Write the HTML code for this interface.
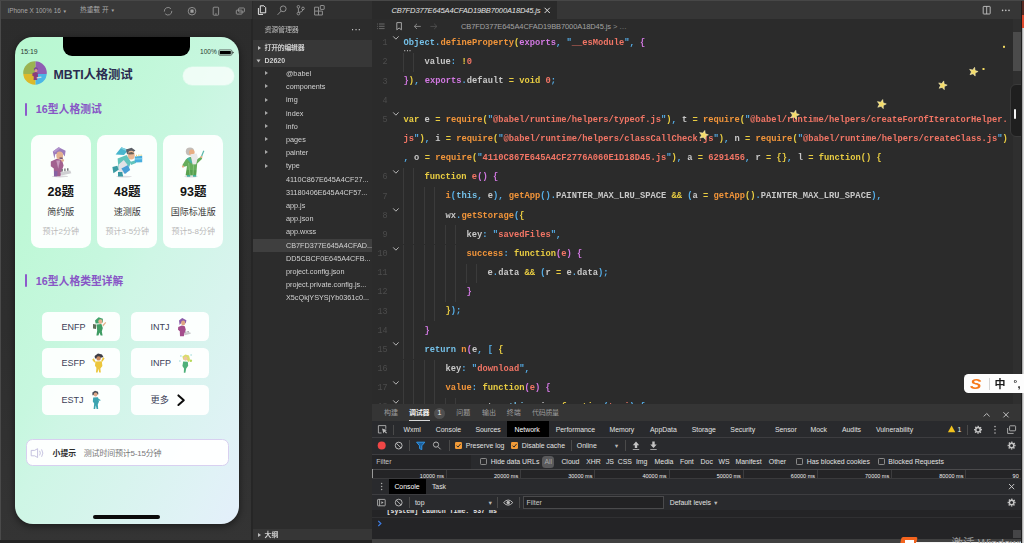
<!DOCTYPE html>
<html lang="zh-CN">
<head>
<meta charset="utf-8">
<title>MBTI devtools</title>
<style>
*{box-sizing:border-box;margin:0;padding:0}
html,body{width:1024px;height:543px;overflow:hidden;background:#2b2b2b}
body{position:relative;font-family:"Liberation Sans","Noto Sans CJK SC",sans-serif;color:#ccc;font-size:7px;line-height:1}
.abs{position:absolute}
.t{position:absolute;white-space:nowrap;line-height:10px;height:10px}
svg{position:absolute;overflow:visible}
/* simulator */
#sim{left:0;top:0;width:252px;height:543px;background:linear-gradient(180deg,#2c2c2c 0%,#2e2e2e 60%,#343434 100%)}
#simbar{left:0;top:0;width:252px;height:19px;background:#393939}
#phone{left:14.5px;top:37px;width:224px;height:486.8px;border-radius:18px;overflow:hidden;
 background:linear-gradient(118deg,#b8f8d1 0%,#bef8d6 22%,#c7f7df 43%,#cef6e5 52%,#d8f4ee 72%,#e0f2f6 89%,#e4effb 100%);
 box-shadow:0 2px 6px 1px rgba(0,0,0,.4)}
.card{position:absolute;top:98px;width:60px;height:113px;background:rgba(255,255,255,.93);border-radius:8.5px}
.card .n{position:absolute;left:0;width:60px;text-align:center;top:50px;font-size:12.5px;line-height:15px;font-weight:bold;color:#141414}
.card .m{position:absolute;left:0;width:60px;text-align:center;top:70.5px;font-size:9px;line-height:12px;color:#3a3a3a}
.card .s{position:absolute;left:-5px;width:70px;text-align:center;top:91.9px;font-size:8px;line-height:10px;color:#b9b9b9}
.btn{position:absolute;width:78px;height:29.5px;background:rgba(255,255,255,.93);border-radius:5.5px}
.btn span{position:absolute;left:19.5px;top:9px;font-size:9px;line-height:12px;color:#3c4058}
.sec{position:absolute;margin-top:.8px;left:21px;font-size:10.8px;line-height:13px;font-weight:bold;color:#8856c6;white-space:nowrap}
.bar{position:absolute;left:10px;width:2px;height:13px;background:#8d5acb;border-radius:1px}
/* explorer */
#exp{left:252.5px;top:0;width:119.5px;height:543px;background:#2c2c2c}
.row{position:absolute;left:286px;font-size:7.25px;line-height:10px;height:10px;white-space:nowrap;color:#d2d2d2}
.arr{position:absolute;width:0;height:0;border-left:3px solid #bdbdbd;border-top:2px solid transparent;border-bottom:2px solid transparent}
/* editor */
#ed{left:372px;top:0;width:652px;height:404px;background:#2b2b2b;overflow:hidden}
.ln{position:absolute;left:0;width:387.5px;text-align:right;font-family:"Liberation Mono",monospace;font-size:8.4px;line-height:12px;height:12px;color:#4c4c4c}
.cl{position:absolute;left:403.6px;font-family:"Liberation Mono",monospace;font-size:8.755px;line-height:12px;height:12px;white-space:pre;font-weight:bold;color:#d2d2d2;letter-spacing:0}
.b{color:#74c0e8}.o{color:#f2953a}.y{color:#e9cd42}.v{color:#d278e2}.p{color:#55aee8}.s{color:#f27565}.w{color:#c8c8c8}
.g{position:absolute;width:1px;background:#3b3b3b}
/* debugger */
#dbg{left:372px;top:404px;width:652px;height:139px;background:#292a2d}
.dt{position:absolute;white-space:nowrap;font-size:7.1px;line-height:10px;height:10px;color:#d6d6d6}
.sep{position:absolute;width:1px;background:#4a4a4a}
.hl{position:absolute;left:372px;width:649px;height:1px;background:#3d3d40}
.cb{position:absolute;width:7px;height:7px;border-radius:1.2px}
#wrap{position:absolute;left:0;top:0;width:1024px;height:543px;overflow:hidden;filter:blur(.55px)}
</style>
</head>
<body>
<div id="wrap">
<!-- ============ SIMULATOR ============ -->
<div id="sim" class="abs"></div>
<div id="simbar" class="abs"></div>
<div class="abs" style="left:0;top:0;width:1024px;height:1px;background:#474747;z-index:5"></div>
<div class="abs" style="left:0;top:0;width:1.3px;height:543px;background:#4a4a4a"></div>
<div class="abs" style="left:250.5px;top:19px;width:2px;height:524px;background:#262626"></div>
<div class="t" style="left:7.8px;top:5.6px;font-size:6.4px;color:#a8a8a8">iPhone X 100% 16 <span style="font-size:4.6px">▼</span></div>
<div class="t" style="left:80px;top:5.4px;font-size:6.7px;color:#a8a8a8">热重载 开 <span style="font-size:4.6px">▼</span></div>
<svg style="left:163px;top:6px" width="90" height="11" viewBox="163 6 90 11" fill="none" stroke="#959595" stroke-width="0.9">
 <path d="M164.3 11.6a3.8 3.8 0 0 1 6.6-2.9M171.8 10.9a3.8 3.8 0 0 1-6.6 2.9"/>
 <circle cx="192" cy="11.2" r="3.8"/><rect x="190.400" y="9.600" width="3.200" height="3.200" rx=".4" fill="#a0a0a0" stroke="none"/>
 <rect x="213.2" y="7.2" width="5.4" height="8" rx="0.8"/><path d="M215 14h1.8"/>
 <rect x="238.6" y="8" width="5.8" height="4" rx="0.7"/><rect x="236.3" y="10.1" width="5.8" height="4" rx="0.7"/>
</svg>

<div id="phone" class="abs"></div>
<!-- notch -->
<div class="abs" style="left:63px;top:37px;width:126.5px;height:19.3px;background:#000;border-radius:0 0 9px 9px"></div>
<div class="t" style="left:20.4px;top:46.9px;font-size:6.9px;color:#2b3a33">15:19</div>
<div class="t" style="left:200px;top:47.4px;font-size:6.6px;color:#2b3a33">100%</div>
<svg style="left:218px;top:48.600px" width="17" height="8" viewBox="218 48 17 8">
 <rect x="218.8" y="48.9" width="13" height="5.4" rx="1" fill="none" stroke="#444" stroke-width="0.7"/>
 <rect x="219.8" y="49.9" width="11" height="3.4" rx="0.5" fill="#000"/>
 <path d="M232.4 50.3l1.5 1.3-1.5 1.3z" fill="#222"/>
</svg>
<!-- avatar -->
<svg style="left:23.300px;top:61.300px" width="24" height="24" viewBox="23 61 24 24">
 <defs><clipPath id="avc"><circle cx="35" cy="73" r="11.8"/></clipPath>
 <filter id="soft" x="-20%" y="-20%" width="140%" height="140%"><feGaussianBlur stdDeviation="0.35"/></filter></defs>
 <g clip-path="url(#avc)">
  <rect x="23" y="61" width="12.6" height="13" fill="#9bb351"/>
  <rect x="35.6" y="61" width="12" height="13" fill="#8f5db3"/>
  <rect x="23" y="74" width="12.6" height="12" fill="#dcb92b"/>
  <rect x="35.6" y="74" width="12" height="12" fill="#4cb6e6"/>
 </g>
 <g filter="url(#soft)">
  <path d="M33.8 68.6l2-1.6 2.2 1.4-.4 2.4-3.4.2z" fill="#7b4c97"/>
  <ellipse cx="36" cy="70.6" rx="1.5" ry="1.7" fill="#d99a86"/>
  <path d="M32.6 73l3-1 2.2 1 .2 3.4-1 3.6h-3.4l.2-3.6-1.6-1z" fill="#8a3e7c"/>
  <path d="M36.6 77.2l4.6-.6.4 1.2-4.8.8z" fill="#d8d8d8"/>
 </g>
</svg>
<div class="t" style="left:53.6px;top:67px;font-size:12.4px;line-height:16px;height:16px;font-weight:bold;color:#2a2b50;letter-spacing:-.1px">MBTI人格测试</div>
<div class="abs" style="left:183px;top:67px;width:51px;height:18px;border-radius:9px;background:rgba(255,255,255,.72);box-shadow:0 0 0 .5px rgba(255,255,255,.5)"></div>

<div class="bar" style="left:25px;top:102.5px"></div>
<div class="sec" style="left:35.8px;top:102.6px">16型人格测试</div>

<div class="card" style="left:30.8px;top:135px"><div class="n">28题</div><div class="m">简约版</div><div class="s">预计2分钟</div></div>
<div class="card" style="left:97.3px;top:135px"><div class="n">48题</div><div class="m">速测版</div><div class="s">预计3-5分钟</div></div>
<div class="card" style="left:163.2px;top:135px"><div class="n">93题</div><div class="m">国际标准版</div><div class="s">预计5-8分钟</div></div>

<!-- card characters -->
<svg style="left:30px;top:140px" width="200" height="40" viewBox="30 140 200 40"><defs><filter id="soft2" x="-20%" y="-20%" width="140%" height="140%"><feGaussianBlur stdDeviation="0.5"/></filter></defs><g filter="url(#soft2)">
 <!-- architect (purple) -->
 <ellipse cx="60" cy="176.400" rx="8" ry="1" fill="#d9d9dc"/>
 <path d="M52.800 151.400l5.800-4.200 7 3.600-.8 5.600-2.400-3.200-7.200 1-.8 4.600z" fill="#9b7bbb"/>
 <path d="M52.800 151.400l5.800-4.200 2 1-5.600 4.400z" fill="#b294cc"/>
 <ellipse cx="59.700" cy="155.400" rx="3.400" ry="3.900" fill="#e3b08f"/>
 <path d="M59.400 157.400l3.200.2.200 1.300-3.200-.2z" fill="#6a4a6a"/>
 <path d="M50.800 161.600l6-2.800 5.200 1.200 1.600 5.600-1.600 4.600-1.600 6h-6.400l-.2-7.800-3-2.200z" fill="#a2608f"/>
 <path d="M54 170.800l3.600.4-.4 5h-3.200z" fill="#8762a3"/>
 <path d="M56.300 160.500l1.900 8.200 1.900-8.200z" fill="#c79abd"/>
 <circle cx="62.600" cy="160.400" r="1.400" fill="#e3b08f"/>
 <path d="M60.200 172.200l10-1.800 1.200 2.800-10 2.200z" fill="#cfcfd2"/>
 <path d="M61.400 169h1.500v2.600h-1.500zM64.200 168.400h1.400v2.800h-1.400zM67 168.200h1.500v2.600H67z" fill="#77777c"/>
 <!-- teal runner -->
 <ellipse cx="124" cy="176.600" rx="8" ry=".9" fill="#dcdce0"/>
 <path d="M115.600 154.600l5.800-7.400 7 2.800-4.400 5z" fill="#49b5cd"/>
 <path d="M121.400 147.200l7 2.800-2.400 1-5-2.600z" fill="#7fd0e0"/>
 <path d="M126 149.400l5.600-1.600 3.800 2.800-3.400 2.600-5 1z" fill="#5a5f66"/>
 <ellipse cx="131.200" cy="155.200" rx="3.500" ry="4.400" fill="#e9b794"/>
 <path d="M128 152.800l3.600-.8 2.400 1-.4 1.200-5 .4z" fill="#6a6058"/>
 <path d="M117.600 158.400l9-3.400 4.400 7-3 8.200h-9.400z" fill="#62c4bc"/>
 <path d="M118.600 164.400l5.200-4.400 5.400 7-3 7-7.600-2z" fill="#e2e2e6"/>
 <path d="M121.400 168.400l6.600-3.400 2.200 5-5.400 4z" fill="#4a9fd6"/>
 <path d="M112.400 167l5-1.200 1.200 4-5.200 3.400z" fill="#3a9aa2"/>
 <path d="M118 172h4.200l1 4.600H118z" fill="#3a9aa2"/>
 <path d="M130 162l6-2v3l-5 2z" fill="#62c4bc"/>
 <path d="M134.800 156.400l7.400-.6v6.400l-7.400.4z" fill="#46aede"/>
 <path d="M134.800 158.600l7.400-.4v1l-7.400.4z" fill="#8fd4f0"/>
 <path d="M136 154.800h1v1.700h-1zM138.400 154.600h1v1.700h-1zM140.600 154.400h1v1.700h-1z" fill="#ead27a"/>
 <!-- green sage -->
 <ellipse cx="191" cy="176.600" rx="7" ry=".9" fill="#dcdce0"/>
 <ellipse cx="190" cy="151.400" rx="4.200" ry="4" fill="#c2bdb8"/>
 <ellipse cx="191.800" cy="152.600" rx="2.800" ry="3" fill="#e8ad82"/>
 <path d="M186 159.200l5-2.400 6 2.400 4-2.400 1.200 2-5 4.600-1 11.800H185.600l1.400-9.200-4 1-.6-2z" fill="#66ad5c"/>
 <path d="M186.600 158.400l3-1.400 3.200 5.600-1.600.8z" fill="#4ab5a0"/>
 <path d="M190.400 154.200l6.400-.6 1 4-1.600 6.600-3.600.4z" fill="#e8e8e8"/>
 <path d="M187 170l9.200.2-.2 5H185.800z" fill="#58a050"/>
 <path d="M188.600 163l1.400 12M193.600 165l-.6 10" stroke="#8cc680" stroke-width=".8" fill="none"/>
 <path d="M201.200 157.200l2.600-6.400" stroke="#5ab8aa" stroke-width="1.200" fill="none"/>
 <circle cx="201.400" cy="157" r="1.100" fill="#e8ad82"/>
 <circle cx="183" cy="166.600" r="1.100" fill="#e8ad82"/>
 <path d="M187 175h3.200v1.800H187zM193 175h3.200v1.800H193z" fill="#3fb09a"/>
</g></svg>

<div class="bar" style="left:25px;top:274px"></div>
<div class="sec" style="left:35.8px;top:274px">16型人格类型详解</div>

<div class="btn" style="left:42px;top:311.6px"><span>ENFP</span></div>
<div class="btn" style="left:131px;top:311.6px"><span>INTJ</span></div>
<div class="btn" style="left:42px;top:348.4px"><span>ESFP</span></div>
<div class="btn" style="left:131px;top:348.4px"><span>INFP</span></div>
<div class="btn" style="left:42px;top:385px"><span>ESTJ</span></div>
<div class="btn" style="left:131px;top:385px"><span style="font-size:9.2px">更多</span></div>
<svg style="left:85px;top:312px" width="115" height="102" viewBox="85 312 115 102"><g filter="url(#soft)">
 <!-- ENFP green -->
 <path d="M95 320.4l3.6-3.2 4.2 1.6.2 3.4-3 1-4.4.4z" fill="#43a26c"/>
 <ellipse cx="100.4" cy="321.6" rx="2.1" ry="2.3" fill="#e6b08d"/>
 <path d="M96.4 324.6l5-.6 1.4 4-1 3.6.8 4h-2l-1-3.2-1.2 3.2h-2l.8-5z" fill="#3f9c63"/>
 <path d="M93 324l3 .6v4.4l-3-.6z" fill="#5f6e58"/>
 <path d="M102.4 325l3-3 .8.8-3 3.6z" fill="#e6b08d"/>
 <!-- ESFP yellow -->
 <path d="M94.6 356l3.4-2.4 4 .8 1.4 2.6-4.4 1.2-4 .4z" fill="#3d3d45"/>
 <ellipse cx="98.6" cy="358.4" rx="2.2" ry="2.2" fill="#c98a5e"/>
 <path d="M95.4 361.4l6.4-.2.6 4.8-2 2.4.4 4h-1.600l-.8-3.600-.8 3.600H96l.4-4.600-1.400-2z" fill="#ecc63c"/>
 <path d="M92.200 359.800l1.600-1.600 1.800 3.600-1.200.8zM104.600 358.400l-1.600-1.400-1.800 4 1.200.8z" fill="#ecc63c"/>
 <!-- ESTJ teal -->
 <path d="M92.400 392.400l2.600-1.600 3 1 .4 2.400-3 .8-3 .2z" fill="#4b4f58"/>
 <ellipse cx="95.600" cy="394.600" rx="1.900" ry="2" fill="#dca687"/>
 <path d="M93.200 397.400l4.800-.2 1 4.400-1.200 3 .4 4.400h-1.600l-.8-3.800-.6 3.800h-1.600l.6-5.600-1.400-2z" fill="#3aa3b0"/>
 <path d="M98.200 398.400l2.400 1.600-.6 1-2.400-1.400z" fill="#3aa3b0"/>
 <!-- INTJ purple -->
 <path d="M179 320.600l3.200-2.600 4.200 2.200-.6 3-4.200-.6-2 2.400z" fill="#8a5caa"/>
 <ellipse cx="183.200" cy="323" rx="2.100" ry="2.400" fill="#dfa684"/>
 <path d="M178.200 327l3.600-1.600 3 .8 1 3.600-1 2.800-1 3.600h-3.800l-.2-5-1.800-1.400z" fill="#a44e8c"/>
 <path d="M184.200 333.200l6-1 .6 1.600-6 1.400z" fill="#c9c9cb"/>
 <path d="M185.400 331.400h.9v1.400h-.9zM187.600 331h.9v1.600h-.9z" fill="#6d6d72"/>
 <!-- INFP yellow-green -->
 <path d="M182.400 356.600l3-2.200 3.600 1.200 1 3.600-1.200 3-2.400-3-3.200.6z" fill="#d9dc6a"/>
 <ellipse cx="185.600" cy="358.600" rx="1.900" ry="2.100" fill="#eec4a0"/>
 <path d="M183.200 361.600l4.600.2.400 4-2 2.800-.8 4.200h-1.600l.2-4.400-1.600-2.400z" fill="#4fb07a"/>
 <circle cx="190.800" cy="360.800" r="1.300" fill="#b7d95a"/>
 <path d="M180.400 355.600h1v1h-1zM190.600 354.600h1v1h-1zM179.400 360.600h1v1h-1z" fill="#5ac1c0"/>
 </g>
 <path d="M178.400 395.400l5.400 4.800-5.400 4.800" fill="none" stroke="#0c0c0c" stroke-width="2" stroke-linecap="round" stroke-linejoin="round"/>
</svg>

<!-- tip bar -->
<div class="abs" style="left:25.6px;top:439.300px;width:203px;height:27.200px;border-radius:6.5px;background:rgba(255,255,255,.95);border:.8px solid #d8d0f0"></div>
<svg style="left:30px;top:447px" width="16" height="12" viewBox="30 447 16 12" fill="none" stroke="#b7b4d8" stroke-width="0.8">
 <path d="M31.200 450.400h3.400l3-1.700v8.800l-3-1.700h-3.400z"/><path d="M39.600 450.800q1.500 2.300 0 4.600M41.600 449.400q2.500 3.700 0 7.400"/>
</svg>
<div class="t" style="left:52.6px;top:448.700px;font-size:7.8px;font-weight:bold;color:#2c2c2c">小提示</div>
<div class="t" style="left:83.800px;top:448.700px;font-size:8px;color:#777;letter-spacing:-.2px">测试时间预计5-15分钟</div>
<!-- home bar -->
<div class="abs" style="left:93px;top:515px;width:66.500px;height:3.600px;border-radius:2px;background:#0a0a0a"></div>
<!-- ============ EXPLORER ============ -->
<div id="exp" class="abs"></div>
<div class="abs" style="left:252.5px;top:0;width:119.500px;height:19px;background:#303030"></div>
<svg style="left:255px;top:3px" width="75" height="15" viewBox="255 3 75 15" fill="none" stroke="#949494" stroke-width="0.95">
 <path d="M260.300 5.800h3.600l1.800 1.800v5.200h-5.400z" stroke="#ededed"/><path d="M258.400 8v6.400h4.600" stroke="#ededed"/>
 <circle cx="283.200" cy="8.800" r="2.900"/><path d="M281.200 11l-3.600 3.800"/>
 <circle cx="298.400" cy="6.800" r="1.300"/><circle cx="298.400" cy="13.600" r="1.300"/><circle cx="303" cy="8.400" r="1.300"/><path d="M298.400 8.100v4.200M303 9.700q-.2 2.400-4.400 2.800"/>
 <path d="M314.600 7.200h3.900v3.900h3.900v3.900h-7.800zM314.600 11.100h3.900v3.900"/><rect x="320.300" y="5.500" width="3.900" height="3.900" rx=".4" fill="#303030"/>
</svg>
<div class="t" style="left:264.500px;top:24.800px;font-size:7px;color:#bdbdbd;letter-spacing:-.2px">资源管理器</div>
<div class="t" style="left:351.500px;top:25.400px;font-size:7.5px;color:#c4c4c4;letter-spacing:.9px;font-weight:bold">···</div>
<div class="abs" style="left:252.500px;top:40.200px;width:119.500px;height:27px;background:#373737"></div>
<div class="arr" style="left:257.600px;top:45.600px"></div>
<div class="t" style="left:264.500px;top:42.700px;font-size:6.9px;font-weight:bold;color:#cfcfcf;letter-spacing:-.25px">打开的编辑器</div>
<div class="arr" style="left:256.800px;top:58.800px;transform:rotate(90deg)"></div>
<div class="t" style="left:264.500px;top:56.200px;font-size:7px;font-weight:bold;color:#cfcfcf">D2620</div>
<div class="arr" style="left:265.200px;top:71.2px;border-left-color:#a8a8a8"></div><div class="row" style="top:69.0px">@babel</div>
<div class="arr" style="left:265.200px;top:84.4px;border-left-color:#a8a8a8"></div><div class="row" style="top:82.2px">components</div>
<div class="arr" style="left:265.200px;top:97.6px;border-left-color:#a8a8a8"></div><div class="row" style="top:95.4px">img</div>
<div class="arr" style="left:265.200px;top:110.8px;border-left-color:#a8a8a8"></div><div class="row" style="top:108.6px">index</div>
<div class="arr" style="left:265.200px;top:124.0px;border-left-color:#a8a8a8"></div><div class="row" style="top:121.8px">info</div>
<div class="arr" style="left:265.200px;top:137.2px;border-left-color:#a8a8a8"></div><div class="row" style="top:135.0px">pages</div>
<div class="arr" style="left:265.200px;top:150.3px;border-left-color:#a8a8a8"></div><div class="row" style="top:148.1px">painter</div>
<div class="arr" style="left:265.200px;top:163.5px;border-left-color:#a8a8a8"></div><div class="row" style="top:161.3px">type</div>
<div class="row" style="top:174.5px">4110C867E645A4CF27...</div>
<div class="row" style="top:187.7px">31180406E645A4CF57...</div>
<div class="row" style="top:200.9px">app.js</div>
<div class="row" style="top:214.1px">app.json</div>
<div class="row" style="top:227.3px">app.wxss</div>
<div class="abs" style="left:252.500px;top:238.8px;width:119.500px;height:12.800px;background:#3f3f3f"></div>
<div class="row" style="top:240.5px">CB7FD377E645A4CFAD...</div>
<div class="row" style="top:253.7px">DD5CBCF0E645A4CFB...</div>
<div class="row" style="top:266.9px">project.config.json</div>
<div class="row" style="top:280.0px">project.private.config.js...</div>
<div class="row" style="top:293.2px">X5cQkjYSYSjYb0361c0...</div>
<div class="abs" style="left:252.500px;top:529px;width:119.500px;height:10.500px;background:#363636"></div>
<div class="arr" style="left:257.600px;top:533.400px"></div>
<div class="t" style="left:264.500px;top:530.400px;font-size:6.9px;font-weight:bold;color:#cfcfcf">大纲</div>
<!-- ============ EDITOR ============ -->
<div id="ed" class="abs"></div>
<div class="abs" style="left:372px;top:0;width:652px;height:19px;background:#363636"></div>
<div class="abs" style="left:372px;top:0;width:185px;height:19px;background:#2a2a2a"></div>
<div class="t" style="left:391.400px;top:6.300px;font-size:7.5px;font-style:italic;color:#e4e4e4;letter-spacing:-.12px">CB7FD377E645A4CFAD19BB7000A18D45.js</div>
<svg style="left:543px;top:6px" width="9" height="9" viewBox="0 0 9 9"><path d="M1.600 1.800l5.200 5.200M6.800 1.800L1.600 7" stroke="#e0e0e0" stroke-width="1" fill="none"/></svg>
<svg style="left:980px;top:4px" width="36" height="13" viewBox="980 4 36 13" fill="none" stroke="#c4c4c4" stroke-width="0.9"><rect x="983.200" y="6.400" width="7" height="7.600" rx=".6"/><path d="M986.700 6.400v7.600"/><g fill="#c4c4c4" stroke="none"><circle cx="1002.600" cy="10.400" r=".8"/><circle cx="1005.800" cy="10.400" r=".8"/><circle cx="1009" cy="10.400" r=".8"/></g></svg>
<svg style="left:376px;top:20px" width="66" height="13" viewBox="376 20 66 13" fill="none" stroke="#8a8a8a" stroke-width="0.9">
 <path d="M379 24h5.600M379 26.300h5.600M379 28.600h5.600M377.200 24h.8M377.200 26.300h.8M377.200 28.600h.8" stroke="#6f6f6f"/>
 <path d="M396.800 22.600h4.600v7.200l-2.300-1.800-2.300 1.800z" stroke="#b0b0b0"/>
 <path d="M420.800 26.400h-6.400M417 23.800l-2.700 2.600 2.700 2.600" stroke="#909090"/>
 <path d="M430.400 26.400h6.400M434.200 23.800l2.700 2.600-2.700 2.600" stroke="#505050"/>
</svg>
<div class="t" style="left:461px;top:22.100px;font-size:7.5px;color:#a2a2a2;letter-spacing:-.1px">CB7FD377E645A4CFAD19BB7000A18D45.js <span style="color:#8c8c8c">&gt; …</span></div>
<div class="g" style="left:402.8px;top:52.8px;height:19.2px"></div>
<div class="g" style="left:413.3px;top:52.8px;height:19.2px"></div>
<div class="g" style="left:402.8px;top:167.8px;height:19.2px"></div>
<div class="g" style="left:413.3px;top:167.8px;height:19.2px"></div>
<div class="g" style="left:402.8px;top:187.0px;height:19.2px"></div>
<div class="g" style="left:413.3px;top:187.0px;height:19.2px"></div>
<div class="g" style="left:423.8px;top:187.0px;height:19.2px"></div>
<div class="g" style="left:434.3px;top:187.0px;height:19.2px"></div>
<div class="g" style="left:402.8px;top:206.1px;height:19.2px"></div>
<div class="g" style="left:413.3px;top:206.1px;height:19.2px"></div>
<div class="g" style="left:423.8px;top:206.1px;height:19.2px"></div>
<div class="g" style="left:434.3px;top:206.1px;height:19.2px"></div>
<div class="g" style="left:402.8px;top:225.3px;height:19.2px"></div>
<div class="g" style="left:413.3px;top:225.3px;height:19.2px"></div>
<div class="g" style="left:423.8px;top:225.3px;height:19.2px"></div>
<div class="g" style="left:434.3px;top:225.3px;height:19.2px"></div>
<div class="g" style="left:444.8px;top:225.3px;height:19.2px"></div>
<div class="g" style="left:455.3px;top:225.3px;height:19.2px"></div>
<div class="g" style="left:402.8px;top:244.5px;height:19.2px"></div>
<div class="g" style="left:413.3px;top:244.5px;height:19.2px"></div>
<div class="g" style="left:423.8px;top:244.5px;height:19.2px"></div>
<div class="g" style="left:434.3px;top:244.5px;height:19.2px"></div>
<div class="g" style="left:444.8px;top:244.5px;height:19.2px"></div>
<div class="g" style="left:455.3px;top:244.5px;height:19.2px"></div>
<div class="g" style="left:402.8px;top:263.7px;height:19.2px"></div>
<div class="g" style="left:413.3px;top:263.7px;height:19.2px"></div>
<div class="g" style="left:423.8px;top:263.7px;height:19.2px"></div>
<div class="g" style="left:434.3px;top:263.7px;height:19.2px"></div>
<div class="g" style="left:444.8px;top:263.7px;height:19.2px"></div>
<div class="g" style="left:455.3px;top:263.7px;height:19.2px"></div>
<div class="g" style="left:465.8px;top:263.7px;height:19.2px"></div>
<div class="g" style="left:476.4px;top:263.7px;height:19.2px"></div>
<div class="g" style="left:402.8px;top:282.8px;height:19.2px"></div>
<div class="g" style="left:413.3px;top:282.8px;height:19.2px"></div>
<div class="g" style="left:423.8px;top:282.8px;height:19.2px"></div>
<div class="g" style="left:434.3px;top:282.8px;height:19.2px"></div>
<div class="g" style="left:444.8px;top:282.8px;height:19.2px"></div>
<div class="g" style="left:455.3px;top:282.8px;height:19.2px"></div>
<div class="g" style="left:402.8px;top:302.0px;height:19.2px"></div>
<div class="g" style="left:413.3px;top:302.0px;height:19.2px"></div>
<div class="g" style="left:423.8px;top:302.0px;height:19.2px"></div>
<div class="g" style="left:434.3px;top:302.0px;height:19.2px"></div>
<div class="g" style="left:402.8px;top:321.2px;height:19.2px"></div>
<div class="g" style="left:413.3px;top:321.2px;height:19.2px"></div>
<div class="g" style="left:402.8px;top:340.3px;height:19.2px"></div>
<div class="g" style="left:413.3px;top:340.3px;height:19.2px"></div>
<div class="g" style="left:402.8px;top:359.5px;height:19.2px"></div>
<div class="g" style="left:413.3px;top:359.5px;height:19.2px"></div>
<div class="g" style="left:423.8px;top:359.5px;height:19.2px"></div>
<div class="g" style="left:434.3px;top:359.5px;height:19.2px"></div>
<div class="g" style="left:402.8px;top:378.7px;height:19.2px"></div>
<div class="g" style="left:413.3px;top:378.7px;height:19.2px"></div>
<div class="g" style="left:423.8px;top:378.7px;height:19.2px"></div>
<div class="g" style="left:434.3px;top:378.7px;height:19.2px"></div>
<div class="g" style="left:402.8px;top:397.8px;height:19.2px"></div>
<div class="g" style="left:413.3px;top:397.8px;height:19.2px"></div>
<div class="g" style="left:423.8px;top:397.8px;height:19.2px"></div>
<div class="g" style="left:434.3px;top:397.8px;height:19.2px"></div>
<div class="g" style="left:444.8px;top:397.8px;height:19.2px"></div>
<div class="g" style="left:455.3px;top:397.8px;height:19.2px"></div>
<div class="ln" style="top:37.2px">1</div>
<svg style="left:391.500px;top:34.7px" width="8" height="6" viewBox="0 0 8 6"><path d="M1.200 1.400l2.700 2.800 2.700-2.800" fill="none" stroke="#bdbdbd" stroke-width="0.95"/></svg>
<div class="cl" style="top:37.0px"><span class="b">Object</span><span class="p">.</span><span class="o">defineProperty</span><span class="y">(</span><span class="v">exports</span><span class="p">, "</span><span class="s">__esModule</span><span class="p">", </span><span class="v">{</span></div>
<div class="ln" style="top:56.4px">2</div>
<div class="cl" style="top:56.2px"><span class="w">    value</span><span class="p">: </span><span class="y">!</span><span class="s">0</span></div>
<div class="ln" style="top:75.5px">3</div>
<div class="cl" style="top:75.3px"><span class="v">}</span><span class="y">)</span><span class="p">, </span><span class="v">exports</span><span class="p">.</span><span class="w">default </span><span class="y">= void </span><span class="s">0</span><span class="p">;</span></div>
<div class="ln" style="top:94.7px">4</div>
<div class="ln" style="top:113.9px">5</div>
<svg style="left:391.500px;top:111.4px" width="8" height="6" viewBox="0 0 8 6"><path d="M1.200 1.400l2.700 2.800 2.700-2.800" fill="none" stroke="#bdbdbd" stroke-width="0.95"/></svg>
<div class="cl" style="top:113.7px"><span class="y">var </span><span class="w">e </span><span class="y">= </span><span class="o">require</span><span class="y">(</span><span class="p">"</span><span class="s">@babel/runtime/helpers/typeof.js</span><span class="p">"</span><span class="y">)</span><span class="p">, </span><span class="w">t </span><span class="y">= </span><span class="o">require</span><span class="y">(</span><span class="p">"</span><span class="s">@babel/runtime/helpers/createForOfIteratorHelper.</span></div>
<div class="cl" style="top:132.9px"><span class="s">js</span><span class="p">"</span><span class="y">)</span><span class="p">, </span><span class="w">i </span><span class="y">= </span><span class="o">require</span><span class="y">(</span><span class="p">"</span><span class="s">@babel/runtime/helpers/classCallCheck.js</span><span class="p">"</span><span class="y">)</span><span class="p">, </span><span class="w">n </span><span class="y">= </span><span class="o">require</span><span class="y">(</span><span class="p">"</span><span class="s">@babel/runtime/helpers/createClass.js</span><span class="p">"</span><span class="y">)</span></div>
<div class="cl" style="top:152.0px"><span class="p">, </span><span class="w">o </span><span class="y">= </span><span class="o">require</span><span class="y">(</span><span class="p">"</span><span class="s">4110C867E645A4CF2776A060E1D18D45.js</span><span class="p">"</span><span class="y">)</span><span class="p">, </span><span class="w">a </span><span class="y">= </span><span class="s">6291456</span><span class="p">, </span><span class="w">r </span><span class="y">= {}</span><span class="p">, </span><span class="w">l </span><span class="y">= function() {</span></div>
<div class="ln" style="top:171.4px">6</div>
<svg style="left:391.500px;top:168.9px" width="8" height="6" viewBox="0 0 8 6"><path d="M1.200 1.400l2.700 2.800 2.700-2.800" fill="none" stroke="#bdbdbd" stroke-width="0.95"/></svg>
<div class="cl" style="top:171.2px"><span class="y">    function </span><span class="s">e</span><span class="v">() {</span></div>
<div class="ln" style="top:190.6px">7</div>
<div class="cl" style="top:190.4px"><span class="o">        i</span><span class="p">(</span><span class="b">this</span><span class="p">, </span><span class="w">e</span><span class="p">), </span><span class="o">getApp</span><span class="p">().</span><span class="w">PAINTER_MAX_LRU_SPACE </span><span class="y">&amp;&amp; </span><span class="p">(</span><span class="w">a </span><span class="y">= </span><span class="o">getApp</span><span class="y">()</span><span class="p">.</span><span class="w">PAINTER_MAX_LRU_SPACE</span><span class="p">),</span></div>
<div class="ln" style="top:209.7px">8</div>
<svg style="left:391.500px;top:207.2px" width="8" height="6" viewBox="0 0 8 6"><path d="M1.200 1.400l2.700 2.800 2.700-2.800" fill="none" stroke="#bdbdbd" stroke-width="0.95"/></svg>
<div class="cl" style="top:209.5px"><span class="w">        wx</span><span class="p">.</span><span class="o">getStorage</span><span class="p">(</span><span class="y">{</span></div>
<div class="ln" style="top:228.9px">9</div>
<div class="cl" style="top:228.7px"><span class="w">            key</span><span class="p">: "</span><span class="s">savedFiles</span><span class="p">",</span></div>
<div class="ln" style="top:248.1px">10</div>
<svg style="left:391.500px;top:245.6px" width="8" height="6" viewBox="0 0 8 6"><path d="M1.200 1.400l2.700 2.800 2.700-2.800" fill="none" stroke="#bdbdbd" stroke-width="0.95"/></svg>
<div class="cl" style="top:247.9px"><span class="o">            success</span><span class="p">: </span><span class="y">function</span><span class="v">(</span><span class="s">e</span><span class="v">) {</span></div>
<div class="ln" style="top:267.2px">11</div>
<div class="cl" style="top:267.0px"><span class="w">                e</span><span class="p">.</span><span class="w">data </span><span class="y">&amp;&amp; </span><span class="p">(</span><span class="w">r </span><span class="y">= </span><span class="w">e</span><span class="p">.</span><span class="w">data</span><span class="p">);</span></div>
<div class="ln" style="top:286.4px">12</div>
<div class="cl" style="top:286.2px"><span class="v">            }</span></div>
<div class="ln" style="top:305.6px">13</div>
<div class="cl" style="top:305.4px"><span class="y">        }</span><span class="p">);</span></div>
<div class="ln" style="top:324.8px">14</div>
<div class="cl" style="top:324.6px"><span class="v">    }</span></div>
<div class="ln" style="top:343.9px">15</div>
<svg style="left:391.500px;top:341.4px" width="8" height="6" viewBox="0 0 8 6"><path d="M1.200 1.400l2.700 2.800 2.700-2.800" fill="none" stroke="#bdbdbd" stroke-width="0.95"/></svg>
<div class="cl" style="top:343.7px"><span class="b">    return </span><span class="o">n</span><span class="v">(</span><span class="w">e</span><span class="p">, [ </span><span class="y">{</span></div>
<div class="ln" style="top:363.1px">16</div>
<div class="cl" style="top:362.9px"><span class="w">        key</span><span class="p">: "</span><span class="s">download</span><span class="p">",</span></div>
<div class="ln" style="top:382.3px">17</div>
<svg style="left:391.500px;top:379.8px" width="8" height="6" viewBox="0 0 8 6"><path d="M1.200 1.400l2.700 2.800 2.700-2.800" fill="none" stroke="#bdbdbd" stroke-width="0.95"/></svg>
<div class="cl" style="top:382.1px"><span class="o">        value</span><span class="p">: </span><span class="y">function</span><span class="v">(</span><span class="s">e</span><span class="v">) {</span></div>
<div class="ln" style="top:401.4px">18</div>
<svg style="left:391.500px;top:398.9px" width="8" height="6" viewBox="0 0 8 6"><path d="M1.200 1.400l2.700 2.800 2.700-2.800" fill="none" stroke="#bdbdbd" stroke-width="0.95"/></svg>
<div class="cl" style="top:401.2px"><span class="y">            var </span><span class="w">t </span><span class="y">= </span><span class="b">this</span><span class="p">, </span><span class="w">i </span><span class="y">= function</span><span class="p">(</span><span class="s">t</span><span class="p">, </span><span class="s">i</span><span class="p">) {</span></div>
<div class="t" style="left:403.800px;top:45.800px;font-size:7px;color:#b0b0b0;letter-spacing:.3px;font-weight:bold">···</div>
<svg style="left:690px;top:40px" width="330" height="110" viewBox="690 40 330 110"><g filter="url(#soft)"><polygon points="974.6,67.3 975.1,70.5 978.1,71.5 975.2,72.9 975.2,76.1 973.0,73.8 970.0,74.7 971.4,71.9 969.6,69.3 972.7,69.9" fill="#f4dc6a" stroke="#fff6c8" stroke-width=".5" stroke-linejoin="round"/><polygon points="943.7,80.9 944.2,84.1 947.2,85.1 944.3,86.5 944.3,89.7 942.1,87.4 939.1,88.3 940.5,85.5 938.7,82.9 941.8,83.5" fill="#f4dc6a" stroke="#fff6c8" stroke-width=".5" stroke-linejoin="round"/><polygon points="882.7,99.5 883.2,102.8 886.3,103.9 883.3,105.4 883.3,108.7 881.0,106.3 877.8,107.3 879.3,104.3 877.4,101.6 880.7,102.2" fill="#f4dc6a" stroke="#fff6c8" stroke-width=".5" stroke-linejoin="round"/><polygon points="795.8,110.2 796.3,113.5 799.4,114.6 796.4,116.1 796.4,119.4 794.1,117.0 790.9,118.0 792.4,115.0 790.5,112.3 793.8,112.9" fill="#f4dc6a" stroke="#fff6c8" stroke-width=".5" stroke-linejoin="round"/><polygon points="704.8,130.4 705.3,133.7 708.4,134.8 705.4,136.3 705.4,139.6 703.1,137.2 699.9,138.2 701.4,135.2 699.5,132.5 702.8,133.1" fill="#f4dc6a" stroke="#fff6c8" stroke-width=".5" stroke-linejoin="round"/><rect x="1003" y="45.800" width="2" height="2" fill="#f0d860"/><rect x="982.500" y="68" width="2" height="2" fill="#f0d860"/></g></svg>
<div class="abs" style="left:1012.500px;top:19px;width:8.500px;height:385px;background:#2f2f2f"></div>
<div class="abs" style="left:1012.500px;top:32px;width:8.500px;height:38.500px;background:#4b4b4b"></div>
<div class="abs" style="left:1009.500px;top:84px;width:12px;height:53px;border-radius:6px 0 0 6px;background:#1f1f1f;border:.6px solid #3a3a3a"></div>
<div class="abs" style="left:1013.800px;top:109px;width:2.600px;height:10px;border-radius:1px;background:#f2f2f2"></div>
<div class="abs" style="left:964.300px;top:374.200px;width:60px;height:19.300px;border-radius:4.500px 0 0 4.500px;background:#fdfdfd;z-index:6"></div>
<div class="t" style="left:970px;top:376.800px;font-size:14.5px;line-height:15px;height:15px;font-weight:bold;font-style:italic;color:#f7791a;transform:scale(1.18,.98);transform-origin:left center;z-index:7">S</div>
<div class="abs" style="left:988.600px;top:378px;width:.8px;height:11.500px;background:#d4d4d4;z-index:7"></div>
<div class="t" style="left:994.600px;top:377.900px;font-size:11px;line-height:12px;height:12px;font-weight:bold;color:#1a1a1a;z-index:7">中</div>
<div class="t" style="left:1013.600px;top:376.600px;font-size:9px;line-height:12px;height:12px;font-weight:bold;color:#1a1a1a;z-index:7">°</div>
<div class="t" style="left:1017.400px;top:378.200px;font-size:11px;line-height:12px;height:12px;font-weight:bold;color:#1a1a1a;z-index:7">,</div>
<!-- ============ DEBUGGER ============ -->
<div id="dbg" class="abs"></div>
<div class="abs" style="left:372px;top:404px;width:649.500px;height:17.400px;background:#353535"></div>
<div class="dt" style="left:384px;top:408.2px;font-size:7px;color:#9c9c9c;">构建</div>
<div class="dt" style="left:409px;top:408.2px;font-size:7px;color:#f0f0f0;font-weight:bold;letter-spacing:-.3px">调试器</div>
<div class="abs" style="left:408.600px;top:420.400px;width:21px;height:1px;background:#d8d8d8"></div>
<div class="abs" style="left:433.700px;top:407.600px;width:11.200px;height:11.200px;border-radius:6px;background:#4f4f4f"></div>
<div class="dt" style="left:437.5px;top:408.2px;font-size:7px;color:#f0f0f0;">1</div>
<div class="dt" style="left:456.3px;top:408.2px;font-size:7px;color:#9c9c9c;">问题</div>
<div class="dt" style="left:481.9px;top:408.2px;font-size:7px;color:#9c9c9c;">输出</div>
<div class="dt" style="left:506.7px;top:408.2px;font-size:7px;color:#9c9c9c;">终端</div>
<div class="dt" style="left:532px;top:408.2px;font-size:7px;color:#9c9c9c;letter-spacing:-.3px">代码质量</div>
<svg style="left:980px;top:409px" width="34" height="12" viewBox="980 409 34 12" fill="none" stroke="#cfcfcf" stroke-width="0.9"><path d="M983.800 416.400l2.900-2.900 2.900 2.900"/><path d="M1003.400 412.200l5.200 5.200M1008.600 412.200l-5.200 5.200"/></svg>
<div class="abs" style="left:372px;top:421.400px;width:649.500px;height:16.200px;background:#292a2d"></div>
<div class="abs" style="left:507px;top:421.400px;width:41.700px;height:15.400px;background:#000"></div>
<div class="hl" style="top:437.200px"></div>
<svg style="left:376px;top:424px" width="12" height="12" viewBox="376 424 12 12" fill="none" stroke="#b8b8b8" stroke-width="0.85"><path d="M385.800 428.800v-3.200h-7.400v7.400h3.200"/><path d="M382 428.600l1.400 5 1-1.800 1.800 1.800.8-.8-1.800-1.800 1.800-1z" fill="#b8b8b8" stroke="none"/></svg>
<div class="sep" style="left:392.800px;top:424.500px;height:10.500px"></div>
<div class="dt" style="left:403.5px;top:424.8px;font-size:6.9px;color:#e2e2e2;">Wxml</div>
<div class="dt" style="left:435.8px;top:424.8px;font-size:6.9px;color:#e2e2e2;">Console</div>
<div class="dt" style="left:475.4px;top:424.8px;font-size:6.9px;color:#e2e2e2;">Sources</div>
<div class="dt" style="left:514.5px;top:424.8px;font-size:6.9px;color:#ffffff;">Network</div>
<div class="dt" style="left:555.7px;top:424.8px;font-size:6.9px;color:#e2e2e2;">Performance</div>
<div class="dt" style="left:609.4px;top:424.8px;font-size:6.9px;color:#e2e2e2;">Memory</div>
<div class="dt" style="left:650px;top:424.8px;font-size:6.9px;color:#e2e2e2;">AppData</div>
<div class="dt" style="left:691.7px;top:424.8px;font-size:6.9px;color:#e2e2e2;">Storage</div>
<div class="dt" style="left:730.3px;top:424.8px;font-size:6.9px;color:#e2e2e2;">Security</div>
<div class="dt" style="left:774.9px;top:424.8px;font-size:6.9px;color:#e2e2e2;">Sensor</div>
<div class="dt" style="left:810.5px;top:424.8px;font-size:6.9px;color:#e2e2e2;">Mock</div>
<div class="dt" style="left:841.9px;top:424.8px;font-size:6.9px;color:#e2e2e2;">Audits</div>
<div class="dt" style="left:875.9px;top:424.8px;font-size:6.9px;color:#e2e2e2;">Vulnerability</div>
<svg style="left:946px;top:423px" width="76" height="14" viewBox="946 423 76 14">
 <path d="M951.600 425.600l3.700 6.600h-7.400z" fill="#f2c21c"/>
 <g fill="none" stroke="#c6c6c6"><circle cx="978.0" cy="429.8" r="2.25" stroke-width="1.5"/><circle cx="978.0" cy="429.8" r="3.35" stroke-width="1.3" stroke-dasharray="1.32 1.311" transform="rotate(-14 978.0 429.8)"/></g>
 <g fill="#b4b4b4"><circle cx="995" cy="426.600" r=".8"/><circle cx="995" cy="429.800" r=".8"/><circle cx="995" cy="433" r=".8"/></g>
 <g fill="none" stroke="#b4b4b4" stroke-width=".9"><rect x="1009.600" y="425.800" width="6" height="5" rx=".6"/><path d="M1007.600 428v5.400h6"/></g>
</svg>
<div class="dt" style="left:957.4px;top:424.8px;font-size:6.9px;color:#e2e2e2;">1</div>
<div class="sep" style="left:966.800px;top:424.500px;height:10.500px"></div>
<div class="hl" style="top:453.800px"></div>
<svg style="left:376px;top:439px" width="70" height="14" viewBox="376 439 70 14" fill="none">
 <circle cx="381.700" cy="445.600" r="4" fill="#f04646"/>
 <circle cx="398.700" cy="445.600" r="3.400" stroke="#c0c0c0" stroke-width=".95"/><path d="M396.300 443.200l4.800 4.800" stroke="#c0c0c0" stroke-width=".95"/>
 <path d="M416.600 442.200h8.200l-3 3.600v3.800l-2.200-1v-2.800z" stroke="#2f95e8" stroke-width="1" fill="#1d5f9a" stroke-linejoin="round"/>
 <circle cx="436" cy="444.600" r="2.600" stroke="#b8b8b8" stroke-width=".95"/><path d="M437.900 446.600l2.700 2.700" stroke="#b8b8b8" stroke-width=".95"/>
</svg>
<div class="sep" style="left:409.400px;top:440.400px;height:10.500px"></div>
<div class="sep" style="left:448.500px;top:440.400px;height:10.500px"></div>
<div class="cb" style="left:454.6px;top:442.0px;background:#f29b38"></div>
<svg style="left:454.6px;top:442.0px" width="7" height="7" viewBox="0 0 7 7"><path d="M1.500 3.600l1.500 1.500 2.600-3.200" fill="none" stroke="#2a2a2a" stroke-width="1"/></svg>
<div class="dt" style="left:465.7px;top:440.6px;font-size:6.9px;color:#e2e2e2;">Preserve log</div>
<div class="cb" style="left:510.6px;top:442.0px;background:#f29b38"></div>
<svg style="left:510.6px;top:442.0px" width="7" height="7" viewBox="0 0 7 7"><path d="M1.500 3.600l1.500 1.500 2.600-3.200" fill="none" stroke="#2a2a2a" stroke-width="1"/></svg>
<div class="dt" style="left:521.7px;top:440.6px;font-size:6.9px;color:#e2e2e2;">Disable cache</div>
<div class="sep" style="left:570.700px;top:440.400px;height:10.500px"></div>
<div class="dt" style="left:576.8px;top:440.6px;font-size:6.9px;color:#e2e2e2;">Online</div>
<div class="dt" style="left:613.8px;top:440.6px;font-size:5.6px;color:#b8b8b8;">▼</div>
<div class="sep" style="left:625.300px;top:440.400px;height:10.500px"></div>
<svg style="left:630px;top:440px" width="30" height="12" viewBox="630 440 30 12" fill="#c4c4c4"><path d="M636 441.600l3.200 3.600h-2v2.800h-2.400v-2.800h-2zM632.800 449.200h6.400v.9h-6.400z"/><path d="M653.500 448l3.200-3.600h-2v-2.800h-2.400v2.800h-2zM650.300 449.200h6.400v.9h-6.400z"/></svg>
<svg style="left:1006px;top:440px" width="12" height="12" viewBox="1006 440 12 12"><g fill="none" stroke="#c6c6c6"><circle cx="1011.6" cy="445.6" r="2.25" stroke-width="1.5"/><circle cx="1011.6" cy="445.6" r="3.35" stroke-width="1.3" stroke-dasharray="1.32 1.311" transform="rotate(-14 1011.6 445.6)"/></g></svg>
<div class="abs" style="left:372px;top:454.800px;width:98.500px;height:13.800px;background:#242426"></div>
<div class="dt" style="left:376.2px;top:456.6px;font-size:6.9px;color:#c4c4c4;">Filter</div>
<div class="cb" style="left:479.8px;top:458.0px;border:.8px solid #8a8a8a;background:#2a2a2c"></div>
<div class="dt" style="left:490.7px;top:456.6px;font-size:6.9px;color:#e2e2e2;">Hide data URLs</div>
<div class="abs" style="left:542.400px;top:455.800px;width:11.200px;height:11.800px;border-radius:3.500px;background:#5a5a5c"></div>
<div class="dt" style="left:544.4px;top:456.6px;font-size:6.9px;color:#a8a8a8;">All</div>
<div class="dt" style="left:561.4px;top:456.6px;font-size:6.9px;color:#e2e2e2;">Cloud</div>
<div class="dt" style="left:586.2px;top:456.6px;font-size:6.9px;color:#e2e2e2;">XHR</div>
<div class="dt" style="left:605.9px;top:456.6px;font-size:6.9px;color:#e2e2e2;">JS</div>
<div class="dt" style="left:617.8px;top:456.6px;font-size:6.9px;color:#e2e2e2;">CSS</div>
<div class="dt" style="left:635.9px;top:456.6px;font-size:6.9px;color:#e2e2e2;">Img</div>
<div class="dt" style="left:654.6px;top:456.6px;font-size:6.9px;color:#e2e2e2;">Media</div>
<div class="dt" style="left:680px;top:456.6px;font-size:6.9px;color:#e2e2e2;">Font</div>
<div class="dt" style="left:700.6px;top:456.6px;font-size:6.9px;color:#e2e2e2;">Doc</div>
<div class="dt" style="left:718.6px;top:456.6px;font-size:6.9px;color:#e2e2e2;">WS</div>
<div class="dt" style="left:735.5px;top:456.6px;font-size:6.9px;color:#e2e2e2;">Manifest</div>
<div class="dt" style="left:768.8px;top:456.6px;font-size:6.9px;color:#e2e2e2;">Other</div>
<div class="cb" style="left:796.2px;top:458.0px;border:.8px solid #8a8a8a;background:#2a2a2c"></div>
<div class="dt" style="left:806.7px;top:456.6px;font-size:6.9px;color:#e2e2e2;">Has blocked cookies</div>
<div class="cb" style="left:877.8px;top:458.0px;border:.8px solid #8a8a8a;background:#2a2a2c"></div>
<div class="dt" style="left:888.3px;top:456.6px;font-size:6.9px;color:#e2e2e2;">Blocked Requests</div>
<div class="hl" style="top:468.600px;background:#4a4a4c"></div>
<div class="abs" style="left:372px;top:469.600px;width:649.500px;height:9px;background:#242426"></div>
<div class="abs" style="left:372.300px;top:469px;width:.9px;height:9.600px;background:#9a9a9a"></div>
<div class="sep" style="left:446.0px;top:469.600px;height:9px;background:#3c3c3e"></div>
<div class="dt" style="left:404.0px;width:40px;text-align:right;top:470.800px;font-size:5.5px;color:#f0f0f0">10000 ms</div>
<div class="sep" style="left:520.2px;top:469.600px;height:9px;background:#3c3c3e"></div>
<div class="dt" style="left:478.2px;width:40px;text-align:right;top:470.800px;font-size:5.5px;color:#f0f0f0">20000 ms</div>
<div class="sep" style="left:594.4px;top:469.600px;height:9px;background:#3c3c3e"></div>
<div class="dt" style="left:552.4px;width:40px;text-align:right;top:470.800px;font-size:5.5px;color:#f0f0f0">30000 ms</div>
<div class="sep" style="left:668.6px;top:469.600px;height:9px;background:#3c3c3e"></div>
<div class="dt" style="left:626.6px;width:40px;text-align:right;top:470.800px;font-size:5.5px;color:#f0f0f0">40000 ms</div>
<div class="sep" style="left:742.8px;top:469.600px;height:9px;background:#3c3c3e"></div>
<div class="dt" style="left:700.8px;width:40px;text-align:right;top:470.800px;font-size:5.5px;color:#f0f0f0">50000 ms</div>
<div class="sep" style="left:817.0px;top:469.600px;height:9px;background:#3c3c3e"></div>
<div class="dt" style="left:775.0px;width:40px;text-align:right;top:470.800px;font-size:5.5px;color:#f0f0f0">60000 ms</div>
<div class="sep" style="left:891.2px;top:469.600px;height:9px;background:#3c3c3e"></div>
<div class="dt" style="left:849.2px;width:40px;text-align:right;top:470.800px;font-size:5.5px;color:#f0f0f0">70000 ms</div>
<div class="sep" style="left:965.4px;top:469.600px;height:9px;background:#3c3c3e"></div>
<div class="dt" style="left:923.4px;width:40px;text-align:right;top:470.800px;font-size:5.5px;color:#f0f0f0">80000 ms</div>
<div class="dt" style="left:1012.600px;top:470.800px;font-size:5.5px;color:#f0f0f0">90</div>
<div class="hl" style="top:478.400px;background:#3a3a3c"></div>
<div class="abs" style="left:372px;top:479px;width:649.500px;height:15px;background:#292a2d"></div>
<div class="abs" style="left:389px;top:479px;width:37px;height:15px;background:#000"></div>
<svg style="left:379px;top:481px" width="5" height="12" viewBox="379 481 5 12" fill="#a8a8a8"><circle cx="381.600" cy="483.600" r=".75"/><circle cx="381.600" cy="486.500" r=".75"/><circle cx="381.600" cy="489.400" r=".75"/></svg>
<div class="dt" style="left:394.4px;top:481.5px;font-size:6.9px;color:#ffffff;">Console</div>
<div class="dt" style="left:431.9px;top:481.5px;font-size:6.9px;color:#e2e2e2;">Task</div>
<svg style="left:1007px;top:482px" width="10" height="10" viewBox="1007 482 10 10"><path d="M1009 484l5.200 5.200M1014.200 484l-5.200 5.200" stroke="#cfcfcf" stroke-width=".95" fill="none"/></svg>
<div class="hl" style="top:494px"></div>
<svg style="left:376px;top:497px" width="30" height="12" viewBox="376 497 30 12" fill="none" stroke="#b8b8b8" stroke-width=".85">
 <rect x="377.600" y="499.400" width="7.600" height="6.400" rx=".5"/><path d="M379.600 499.400v6.400"/><path d="M381.400 501.200l2.200 1.400-2.200 1.400z" fill="#b8b8b8" stroke="none"/>
 <circle cx="398.700" cy="502.600" r="3.400" stroke-width=".95"/><path d="M396.300 500.200l4.800 4.800" stroke-width=".95"/></svg>
<div class="sep" style="left:409.400px;top:497.400px;height:10.500px"></div>
<div class="dt" style="left:414.9px;top:497.6px;font-size:6.9px;color:#e2e2e2;">top</div>
<div class="dt" style="left:487.4px;top:497.6px;font-size:5.6px;color:#b8b8b8;">▼</div>
<div class="sep" style="left:497px;top:497.400px;height:10.500px"></div>
<svg style="left:502px;top:498px" width="13" height="10" viewBox="502 498 13 10" fill="none" stroke="#c0c0c0" stroke-width=".95"><path d="M503.600 502.600q4.600-5.200 9.200 0q-4.600 5.200-9.200 0z"/><circle cx="508.200" cy="502.600" r="1.300" fill="#c0c0c0"/></svg>
<div class="sep" style="left:519.400px;top:497.400px;height:10.500px"></div>
<div class="abs" style="left:523.300px;top:496.200px;width:141px;height:12.600px;background:#222224;border:.8px solid #4a4a4c"></div>
<div class="dt" style="left:526.6px;top:497.6px;font-size:6.9px;color:#c8c8c8;">Filter</div>
<div class="dt" style="left:669.7px;top:497.6px;font-size:6.9px;color:#e2e2e2;">Default levels <span style="font-size:5.6px;color:#b8b8b8">▼</span></div>
<svg style="left:1006px;top:497px" width="12" height="12" viewBox="1006 497 12 12"><g fill="none" stroke="#c6c6c6"><circle cx="1011.6" cy="502.6" r="2.25" stroke-width="1.5"/><circle cx="1011.6" cy="502.6" r="3.35" stroke-width="1.3" stroke-dasharray="1.32 1.311" transform="rotate(-14 1011.6 502.6)"/></g></svg>
<div class="hl" style="top:509.600px"></div>
<div class="abs" style="left:372px;top:510.400px;width:649.500px;height:28.200px;background:#242426;overflow:hidden"><div style="position:absolute;left:14.600px;top:-3.400px;font-family:'Liberation Mono',monospace;font-weight:bold;font-size:6.57px;line-height:9px;color:#e6e6e6;white-space:pre">[system] Launch Time: 537 ms</div></div>
<div class="hl" style="top:516.800px;background:#303032"></div>
<svg style="left:377px;top:520px" width="6" height="7" viewBox="0 0 6 7"><path d="M1.300 1l2.600 2.500-2.600 2.500" fill="none" stroke="#3d7be0" stroke-width="1.150"/></svg>
<div class="abs" style="left:1013px;top:529.600px;width:8.500px;height:8px;background:#454547"></div>
<div class="abs" style="left:0;top:539.600px;width:372px;height:3.400px;background:#232323"></div>
<div class="abs" style="left:372px;top:538.600px;width:652px;height:4.400px;background:#404040"></div>
<div class="abs" style="left:900.500px;top:537.400px;width:16px;height:6px;background:#f4641e;transform:skewX(-12deg);border-radius:1.500px 1.500px 0 0"></div>
<div class="abs" style="left:905px;top:539.800px;width:9px;height:3.200px;background:#fff"></div>
<div class="abs" style="left:916px;top:541.600px;width:108px;height:1.400px;background:#f4f4f4"></div>
<div class="abs" style="left:951.500px;top:536.200px;width:70px;height:6.800px;overflow:hidden"><div style="position:absolute;left:0;top:0;font-size:11.500px;line-height:14px;color:#9a9a9a;white-space:nowrap">激活 Windows</div></div>
<div class="abs" style="left:1020.600px;top:0;width:1px;height:543px;background:#1e1e1e"></div>
<div class="abs" style="left:1021.500px;top:0;width:2.500px;height:543px;background:linear-gradient(90deg,#9a9a9a,#ececec)"></div>
<div class="abs" style="left:1021.500px;top:0;width:2.500px;height:15px;background:#5a2a22"></div>
<div class="abs" style="left:1021.500px;top:15px;width:2.500px;height:13px;background:#e0492c"></div>
</div>
</body>
</html>
